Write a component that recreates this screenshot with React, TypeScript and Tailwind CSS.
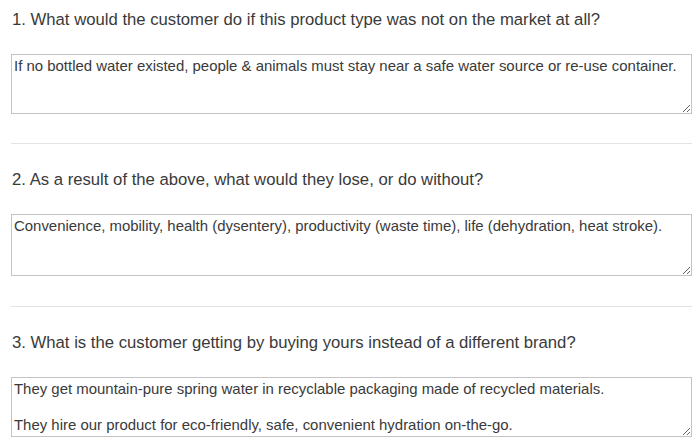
const questions = [
  {
    q: "1. What would the customer do if this product type was not on the market at all?",
    a: "If no bottled water existed, people & animals must stay near a safe water source or re-use container.",
    h: "h-[60px]",
  },
  {
    q: "2. As a result of the above, what would they lose, or do without?",
    a: "Convenience, mobility, health (dysentery), productivity (waste time), life (dehydration, heat stroke).",
    h: "h-[62px]",
  },
  {
    q: "3. What is the customer getting by buying yours instead of a different brand?",
    a: "They get mountain-pure spring water in recyclable packaging made of recycled materials.\n\nThey hire our product for eco-friendly, safe, convenient hydration on-the-go.",
    h: "h-[60px]",
  },
];

export default function App() {
  return (
    <div className="w-[699px] h-[443px] overflow-hidden bg-white pl-[11px] pr-[7px] pt-[9px] font-['Liberation_Sans',Arial,sans-serif] text-[#3a3a3a]">
      {questions.map((item, i) => (
        <section key={i} className="flex flex-col">
          <h2 className="text-[16.7px] leading-[22px] pl-[1px]">{item.q}</h2>
          <textarea
            readOnly
            defaultValue={item.a}
            className={`mt-[23px] w-full ${item.h} border border-[#c4c4c4] px-[2px] py-[2px] text-[14.95px] leading-[18px] text-[#3a3a3a] outline-none overflow-hidden bg-white`}
          />
          {i < questions.length - 1 && (
            <hr className={`border-0 border-t border-[#e3e3e3] ${i === 0 ? "mt-[29px]" : "mt-[30px]"} mb-[25px]`} />
          )}
        </section>
      ))}
    </div>
  );
}
